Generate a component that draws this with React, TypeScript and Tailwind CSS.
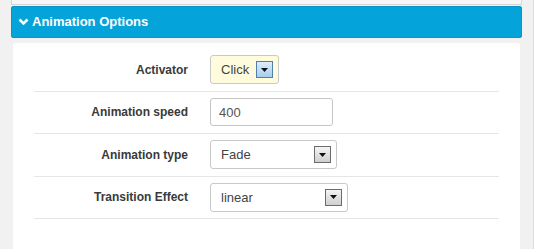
interface IRow {
  label: string;
  kind: "select" | "input";
  value: string;
  width: string;
  tint?: boolean;
}

const rows: IRow[] = [
  { label: "Activator", kind: "select", value: "Click", width: "w-[69px]", tint: true },
  { label: "Animation speed", kind: "input", value: "400", width: "w-[123px]" },
  { label: "Animation type", kind: "select", value: "Fade", width: "w-[127px]" },
  { label: "Transition Effect", kind: "select", value: "linear", width: "w-[138px]" },
];

function Arrow({ tint = false }: { tint?: boolean }) {
  return (
    <span
      className={
        tint
          ? "flex h-[17px] w-[17px] items-center justify-center border border-[#4f7fae] bg-gradient-to-b from-[#dceefb] to-[#a9cdec]"
          : "flex h-[17px] w-[17px] items-center justify-center border border-[#6b6b6b] bg-gradient-to-b from-[#f4f4f4] to-[#cfcfcf]"
      }
    >
      <svg width="7" height="4" viewBox="0 0 7 4">
        <path d="M0 0h7L3.5 4z" fill="#111" />
      </svg>
    </span>
  );
}

function Field({ row }: { row: IRow }) {
  if (row.kind === "input") {
    return (
      <div
        className={`${row.width} flex h-[28px] items-center rounded-[3px] border border-[#c4c4c4] bg-white px-[8px] text-[13px] text-[#555]`}
      >
        {row.value}
      </div>
    );
  }
  return (
    <div
      className={`${row.width} flex h-[29px] items-center justify-between rounded-[3px] border border-[#c9c9c9] pl-[10px] pr-[5px] text-[13px] text-[#444] ${
        row.tint ? "bg-[#fefcdc]" : "bg-white"
      }`}
    >
      <span>{row.value}</span>
      <Arrow tint={row.tint} />
    </div>
  );
}

function App() {
  return (
    <div
      className="flex h-[249px] w-[534px] flex-col overflow-hidden border-r border-[#dcdcdc] bg-[#f1f1f1] px-[11px]"
      style={{ fontFamily: '"Liberation Sans", Arial, sans-serif' }}
    >
      <div className="h-[5px] border-x border-b border-[#d6d6d6] bg-[#f7f7f7]" />
      <div className="mt-[1px] flex h-[32px] items-center gap-[3px] rounded-[2px] border border-[#0a95c6] bg-[#04a3da] pl-[6px] text-[13px] font-bold text-white">
        <svg width="11" height="8" viewBox="0 0 11 8">
          <path d="M1.5 1.5l4 4 4-4" fill="none" stroke="#fff" strokeWidth="2.6" />
        </svg>
        <span>Animation Options</span>
      </div>
      <div className="mx-[2px] mt-[5px] flex-1 rounded-t-[3px] bg-white px-[21px] pt-[6px]">
        {rows.map((row) => (
          <div
            key={row.label}
            className="flex h-[42.5px] items-center gap-[22px] border-b border-[#e6e6e6]"
          >
            <div className="w-[154px] text-right text-[12px] font-bold text-[#3a3a3a]">
              {row.label}
            </div>
            <Field row={row} />
          </div>
        ))}
      </div>
    </div>
  );
}

export default App;
